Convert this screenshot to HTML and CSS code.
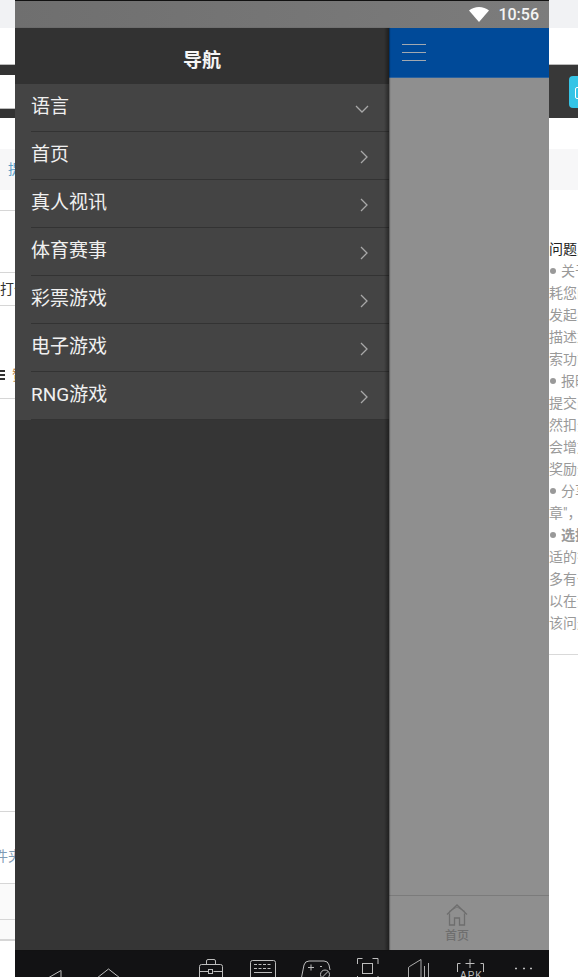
FILE: index.html
```html
<!DOCTYPE html>
<html>
    <head>
        <meta charset="utf-8">
        <title>导航</title>
        <link rel="stylesheet" href="styles.css">
    </head>
    <body>
        <div class="desktop">
            <!-- page behind the phone, left slice -->
            <div class="slice slice-left">
                <div class="s-top"></div>
                <div class="s-white h36"></div>
                <div class="s-dark h11"></div>
                <div class="s-white h33"></div>
                <div class="s-dark h10"></div>
                <div class="s-white h31"></div>
                <div class="s-tabs">提</div>
                <div class="s-white h21 line-b"></div>
                <div class="s-white h62 line-b"></div>
                <div class="s-row h33 line-b"><span>打</span><span class="orange">伯</span></div>
                <div class="s-row h93 line-b list-row"><span class="list-icon"></span><span class="orange">赞</span></div>
                <div class="s-white h413 line-b"></div>
                <div class="s-row h72 line-b folder"><span>件夹</span></div>
                <div class="s-grey h36 line-b"></div>
                <div class="s-grey h21 line-b2"></div>
            </div>

            <div class="phone">
                <div class="statusbar">
                    <svg class="wifi" width="20" height="15" viewBox="0 0 20 15"><path d="M0 3.6C2.8 1.3 6.2 0 10 0s7.200 1.300 10 3.600L10 15z" fill="#fff"/></svg>
                    <span class="time">10:56</span>
                </div>
                <div class="screen">
                    <div class="drawer">
                        <div class="drawer-title">导航</div>
                        <ul class="menu">
                            <li>语言<svg class="chev" width="14" height="8" viewBox="0 0 14 8"><path d="M1 1l6 6 6-6" /></svg></li>
                            <li>首页<svg class="arrow" width="8" height="14" viewBox="0 0 8 14"><path d="M1 1l6 6-6 6" /></svg></li>
                            <li>真人视讯<svg class="arrow" width="8" height="14" viewBox="0 0 8 14"><path d="M1 1l6 6-6 6" /></svg></li>
                            <li>体育赛事<svg class="arrow" width="8" height="14" viewBox="0 0 8 14"><path d="M1 1l6 6-6 6" /></svg></li>
                            <li>彩票游戏<svg class="arrow" width="8" height="14" viewBox="0 0 8 14"><path d="M1 1l6 6-6 6" /></svg></li>
                            <li>电子游戏<svg class="arrow" width="8" height="14" viewBox="0 0 8 14"><path d="M1 1l6 6-6 6" /></svg></li>
                            <li>RNG游戏<svg class="arrow" width="8" height="14" viewBox="0 0 8 14"><path d="M1 1l6 6-6 6" /></svg></li>
                        </ul>
                    </div>
                    <div class="main">
                        <div class="topbar">
                            <div class="burger"><i></i><i></i><i></i></div>
                        </div>
                        <div class="main-body"></div>
                        <div class="tabbar">
                            <svg width="22" height="22" viewBox="0 0 22 22" fill="none" stroke="#6e6e6e" stroke-width="1.300"><path d="M1 10.500L11 1l10 9.500M3.500 9.500V21h5v-7h5v7h5V9.500"/><path d="M3 7.500L11 3l8 4.500" stroke-width=".8"/></svg>
                            <span>首页</span>
                        </div>
                    </div>
                </div>
                <div class="navbar">
                    <svg width="534" height="27" viewBox="0 0 534 27" fill="none" stroke="#bdbdbd" stroke-width="1">
                        <path d="M46 20.500L33 28M46 20.500V34"/>
                        <path d="M82 28L93.500 19 105 28"/>
                        <rect x="184.500" y="14.500" width="23" height="20" rx="2"/>
                        <path d="M191.500 14v-3q0-1.500 1.500-1.500h6q1.500 0 1.500 1.500v3M184.500 21.500h9M198.500 21.500h9"/>
                        <rect x="193.500" y="19.500" width="4" height="4"/>
                        <rect x="235.500" y="10.500" width="25" height="20" rx="2"/>
                        <path d="M239 14.500h18M239 18.500h18" stroke-dasharray="3 1.500"/>
                        <path d="M239 22.500h18"/>
                        <path d="M286 30l3-15q1-4 5-4h15q4 0 5 4l1 5"/>
                        <path d="M293 17.500h6M296 14.500v6M305 16.500h2"/>
                        <circle cx="310" cy="24.500" r="4.500"/>
                        <path d="M307 27.500l6-6"/>
                        <path d="M342.500 14v-5.500h5M357.500 8.500h5.500V14M342.500 26v5M363 26v5"/>
                        <rect x="347.500" y="13.500" width="10" height="10"/>
                        <path d="M393.500 18q0-1 1-1.500L406 9.500v27L394.500 30q-1-.5-1-1.500zM409.500 16v12M413.500 13v16" stroke-width=".9"/>
                        <path d="M442.500 22v-8.500h3M465.500 13.500h3V22M455 9v9M450.500 13.500h9"/>
                        <text x="445" y="29" class="apk">APK</text>
                        <path d="M500 18.500h2M508 18.500h2M515 18.500h2" stroke-width="1.500"/>
                    </svg>
                </div>
            </div>

            <!-- page behind the phone, right slice -->
            <div class="slice slice-right">
                <div class="s-top"></div>
                <div class="s-white h36"></div>
                <div class="s-bar"><span class="cyan-btn"><i></i></span></div>
                <div class="s-white h31"></div>
                <div class="s-tabs"></div>
                <div class="article">
                    <p class="q">问题反</p>
                    <p><i class="dot"></i>关于</p>
                    <p>耗您的</p>
                    <p>发起问</p>
                    <p>描述友</p>
                    <p>索功能</p>
                    <p><i class="dot"></i>报时</p>
                    <p>提交问</p>
                    <p>然扣分</p>
                    <p>会增加</p>
                    <p>奖励分</p>
                    <p><i class="dot"></i>分享</p>
                    <p>章"，</p>
                    <p><i class="dot"></i><b>选择</b></p>
                    <p>适的答</p>
                    <p>多有价</p>
                    <p>以在没</p>
                    <p>该问题</p>
                </div>
            </div>
        </div>
    </body>
</html>
```

FILE: styles.css
```css
html, body {
    margin: 0;
    padding: 0;
    height: 977px;
    overflow: hidden;
    background: #fff;
    font-family: Roboto, "Noto Sans CJK SC", sans-serif;
}

.desktop {
    display: flex;
    width: 578px;
    height: 977px;
    overflow: hidden;
}

/* slices of the page behind the phone */
.slice {
    flex: none;
    overflow: hidden;
    font-size: 14px;
    white-space: nowrap;
}

.slice-left { width: 15px; }
.slice-right { width: 29px; }

.s-top { height: 28px; background: #f1f2f4; }
.s-white { background: #fff; }
.s-dark { background: #333; border-top: 1px solid #bbb; box-sizing: border-box; }
.s-grey { background: #fafafa; }
.s-row { background: #fff; line-height: 32px; color: #333; overflow: hidden; }
.s-tabs {
    height: 41px;
    line-height: 41px;
    background: #f7f7f8;
    color: #5c9fc9;
    padding-left: 8px;
}

.h10 { height: 10px; }
.h11 { height: 11px; }
.h21 { height: 21px; }
.h31 { height: 31px; }
.h33 { height: 33px; }
.h36 { height: 36px; }
.h62 { height: 62px; }
.h72 { height: 72px; }
.h93 { height: 93px; }
.h413 { height: 413px; }

.line-b { border-bottom: 1px solid #d6d6d6; box-sizing: border-box; }
.line-b2 { border-bottom: 2px solid #d6d6d6; box-sizing: border-box; }
.orange { color: #b5813f; }

.list-row {
    display: flex;
    align-items: flex-end;
    gap: 7px;
    padding-bottom: 7px;
}

.list-icon {
    width: 5px;
    height: 11px;
    margin-bottom: 10px;
    flex: none;
    background: repeating-linear-gradient(#333 0 2px, #fff 2px 4px);
}

.folder {
    display: flex;
    align-items: flex-end;
    padding-bottom: 11px;
    color: #7f9bb5;
    margin-left: -6px;
}

.s-bar {
    height: 54px;
    box-sizing: border-box;
    background: #383838;
    border-top: 1px solid #bbb;
    padding: 11px 0 0 20px;
}

.cyan-btn {
    display: block;
    width: 20px;
    height: 32px;
    box-sizing: border-box;
    padding: 11px 0 0 6px;
    border-radius: 4px;
    background: #35c4e6;
}

.cyan-btn i {
    display: block;
    width: 8px;
    height: 10px;
    border: 1px solid #fff;
    border-radius: 2px;
}

.article {
    height: 465px;
    box-sizing: border-box;
    padding-top: 48px;
    border-bottom: 1px solid #d9d9d9;
    color: #999;
    font-size: 14px;
}

.article p {
    margin: 0;
    height: 22px;
    line-height: 22px;
}

.article .q { color: #222; }

.dot {
    display: inline-block;
    width: 6px;
    height: 6px;
    margin: 0 5px 2px 1px;
    border-radius: 50%;
    background: #999;
}

/* phone */
.phone {
    display: flex;
    flex-direction: column;
    flex: none;
    width: 534px;
    height: 977px;
    overflow: hidden;
}

.statusbar {
    display: flex;
    align-items: center;
    justify-content: flex-end;
    gap: 9px;
    height: 27px;
    flex: none;
    padding-right: 10px;
    border-top: 1px solid #111;
    background: linear-gradient(90deg, #6f6f6f, #7c7c7c);
}

.time {
    color: #f4f4f4;
    font-size: 16px;
    font-weight: 500;
    line-height: 27px;
}

.screen {
    display: flex;
    flex: 1;
    min-height: 0;
}

.drawer {
    position: relative;
    z-index: 1;
    flex: none;
    width: 374px;
    background: #353535;
    box-shadow: 1px 0 1px rgba(0, 0, 0, 0.3);
}

/* dark edge along the drawer */
.drawer::after {
    content: "";
    position: absolute;
    top: 0;
    right: 0;
    bottom: 0;
    width: 5px;
    background: linear-gradient(90deg, rgba(0, 0, 0, 0), rgba(0, 0, 0, 0.4));
}

.drawer-title {
    height: 56px;
    line-height: 66px;
    text-align: center;
    color: #f5f5f5;
    font-size: 19px;
    font-weight: 700;
    background: #323232;
}

.menu {
    margin: 0;
    padding: 0;
    list-style: none;
    background: #444;
}

.menu li {
    display: flex;
    align-items: center;
    justify-content: space-between;
    height: 48px;
    box-sizing: border-box;
    margin-left: 16px;
    padding: 0 21px 6px 0;
    border-bottom: 1px solid #333;
    color: #f0f0f0;
    font-size: 19px;
}

.menu li svg {
    fill: none;
    stroke: #a8a8a8;
    stroke-width: 1.300;
    margin-top: 8px;
}

.menu .chev { margin-right: -1px; }

.main {
    display: flex;
    flex-direction: column;
    flex: 1;
    background: #8f8f8f;
}

.topbar {
    height: 50px;
    flex: none;
    background: #004a99;
    border-bottom: 1px solid #2a62a0;
    box-sizing: border-box;
}

.burger {
    display: flex;
    flex-direction: column;
    gap: 7px;
    width: 24px;
    margin: 16px 0 0 13px;
}

.burger i {
    display: block;
    height: 1px;
    background: #a3a9b0;
}

.main-body { flex: 1; }

.tabbar {
    display: flex;
    flex-direction: column;
    align-items: center;
    gap: 3px;
    height: 55px;
    flex: none;
    box-sizing: border-box;
    padding: 8px 24px 0 0;
    border-top: 1px solid #7b7b7b;
    color: #6e6e6e;
    font-size: 12px;
    line-height: 14px;
    font-weight: 500;
}

.navbar {
    height: 27px;
    flex: none;
    overflow: hidden;
    background: #121214;
}

.navbar svg { display: block; }

.apk {
    fill: #bdbdbd;
    stroke: none;
    font-family: "Liberation Sans", sans-serif;
    font-size: 10px;
    letter-spacing: 1px;
}
```
